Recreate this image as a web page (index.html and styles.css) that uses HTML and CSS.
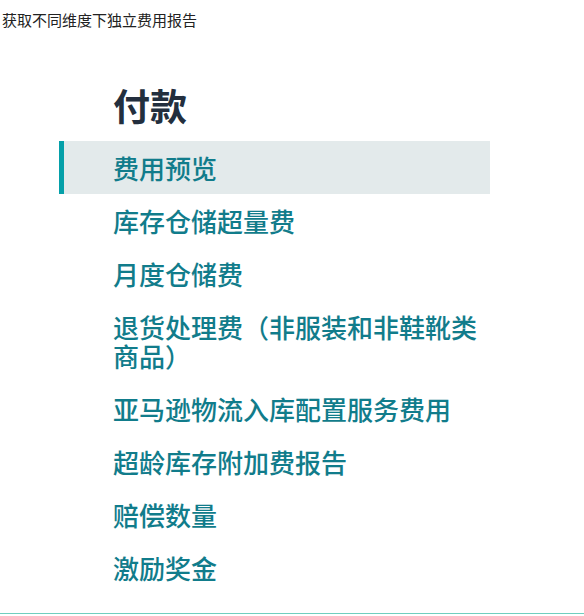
FILE: index.html
```html
<!DOCTYPE html>
<html lang="zh-CN">
<head>
<meta charset="utf-8">
<title>付款</title>
<link rel="stylesheet" href="styles.css">
</head>
<body>
<div class="caption">获取不同维度下独立费用报告</div>
<div class="panel">
  <h1 class="title">付款</h1>
  <ul class="menu">
    <li class="item active">费用预览</li>
    <li class="item">库存仓储超量费</li>
    <li class="item">月度仓储费</li>
    <li class="item">退货处理费（非服装和非鞋靴类商品）</li>
    <li class="item">亚马逊物流入库配置服务费用</li>
    <li class="item">超龄库存附加费报告</li>
    <li class="item">赔偿数量</li>
    <li class="item">激励奖金</li>
  </ul>
</div>
<div class="rule"></div>
</body>
</html>
```
FILE: styles.css
```css
html, body {
  margin: 0;
  padding: 0;
  background: #ffffff;
}
body {
  font-family: "Noto Sans CJK SC", "Noto Sans", sans-serif;
  width: 584px;
}
.caption {
  padding: 9px 2px 0;
  font-size: 15px;
  line-height: 22px;
  color: #222222;
}
.panel {
  margin-left: 59px;
  width: 431px;
}
.title {
  margin: 52px 0 14px;
  padding-left: 54px;
  font-size: 37px;
  line-height: 44px;
  font-weight: 700;
  color: #232f3e;
}
.menu {
  list-style: none;
  margin: 0;
  padding: 0;
}
.item {
  padding: 12px 0 12px 49px;
  border-left: 5px solid transparent;
  font-size: 26px;
  line-height: 29px;
  font-weight: 500;
  color: #117c8b;
}
.item.active {
  border-left-color: #05a0a9;
  background: #e3eaeb;
}
.rule {
  margin-top: 19px;
  border-top: 1px solid #6fcfbf;
}
```
